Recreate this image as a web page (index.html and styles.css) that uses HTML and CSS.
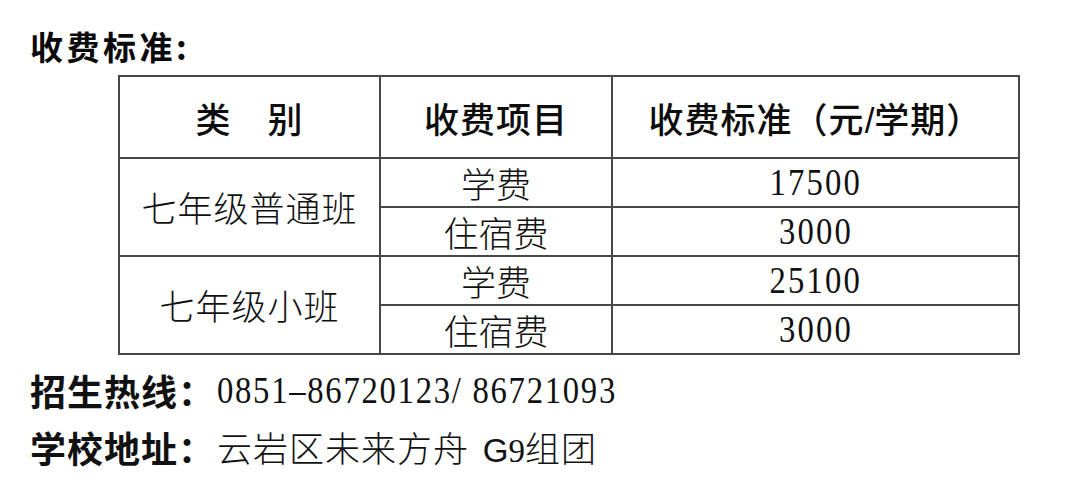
FILE: index.html
```html
<!DOCTYPE html>
<html lang="zh-CN">
<head>
<meta charset="utf-8">
<title>收费标准</title>
<link rel="stylesheet" href="styles.css">
</head>
<body>
<div class="page">
  <h1 class="title">收费标准:</h1>
  <table class="fees">
    <colgroup>
      <col class="c1"><col class="c2"><col class="c3">
    </colgroup>
    <thead>
      <tr class="head">
        <th>类　别</th>
        <th>收费项目</th>
        <th>收费标准（元<span class="slash">/</span>学期）</th>
      </tr>
    </thead>
    <tbody>
      <tr>
        <td rowspan="2" class="cat">七年级普通班</td>
        <td class="item">学费</td>
        <td class="num"><span class="digits">17500</span></td>
      </tr>
      <tr>
        <td class="item">住宿费</td>
        <td class="num"><span class="digits">3000</span></td>
      </tr>
      <tr>
        <td rowspan="2" class="cat">七年级小班</td>
        <td class="item">学费</td>
        <td class="num"><span class="digits">25100</span></td>
      </tr>
      <tr>
        <td class="item">住宿费</td>
        <td class="num"><span class="digits">3000</span></td>
      </tr>
    </tbody>
  </table>
  <div class="info">
    <div class="line"><span class="label">招生热线：</span><span class="phone">0851–86720123/ 86721093</span></div>
    <div class="line"><span class="label">学校地址：</span><span class="addr">云岩区未来方舟 <span class="g">G</span><span class="nine">9</span>组团</span></div>
  </div>
</div>
</body>
</html>
```

FILE: styles.css
```css
html, body {
  margin: 0;
  padding: 0;
  background: #ffffff;
}

body {
  width: 1080px;
  height: 483px;
  overflow: hidden;
  color: #111111;
  font-family: "Noto Sans CJK SC", "Noto Sans", sans-serif;
}

.page {
  padding: 24px 0 0 30px;
}

.title {
  margin: 0;
  font-size: 33px;
  line-height: 44px;
  font-weight: 700;
  letter-spacing: 3.5px;
  color: #0a0a0a;
}

.fees {
  margin: 7px 0 0 88px;
  width: 900px;
  border-collapse: collapse;
  table-layout: fixed;
}

.c1 { width: 261px; }
.c2 { width: 232px; }
.c3 { width: 407px; }

.fees th,
.fees td {
  border: 2px solid #474747;
  padding: 0;
  text-align: center;
  vertical-align: middle;
}

.head th {
  height: 80px;
  font-size: 35px;
  font-weight: 500;
  color: #0d0d0d;
  letter-spacing: 1px;
}

.slash {
  font-family: "Liberation Sans", sans-serif;
  font-weight: 400;
  letter-spacing: 0;
}

.fees tbody td {
  height: 47px;
  font-size: 35px;
  line-height: 44px;
  font-weight: 300;
}

.cat {
  letter-spacing: 1px;
}

.num {
  font-family: "Liberation Serif", serif;
}

.digits {
  display: inline-block;
  font-size: 38px;
  font-weight: 400;
  letter-spacing: 2.5px;
  transform: scaleX(0.86);
  transform-origin: center;
}

.info {
  margin-top: 6px;
}

.line {
  display: flex;
  align-items: center;
  height: 57px;
}

.label {
  font-size: 36px;
  font-weight: 700;
  letter-spacing: 1px;
  width: 187px;
  flex: none;
}

.phone {
  display: inline-block;
  font-family: "Liberation Serif", serif;
  font-size: 38px;
  letter-spacing: 2px;
  transform: scaleX(0.86);
  transform-origin: left center;
}

.addr {
  font-size: 35px;
  font-weight: 300;
  letter-spacing: 1px;
}

.g {
  font-family: "Liberation Sans", sans-serif;
  font-size: 33px;
  font-weight: 400;
  letter-spacing: 0;
  margin-left: 5px;
}

.nine {
  font-family: "Liberation Serif", serif;
  font-size: 33px;
  font-weight: 400;
  letter-spacing: 0;
}
```
